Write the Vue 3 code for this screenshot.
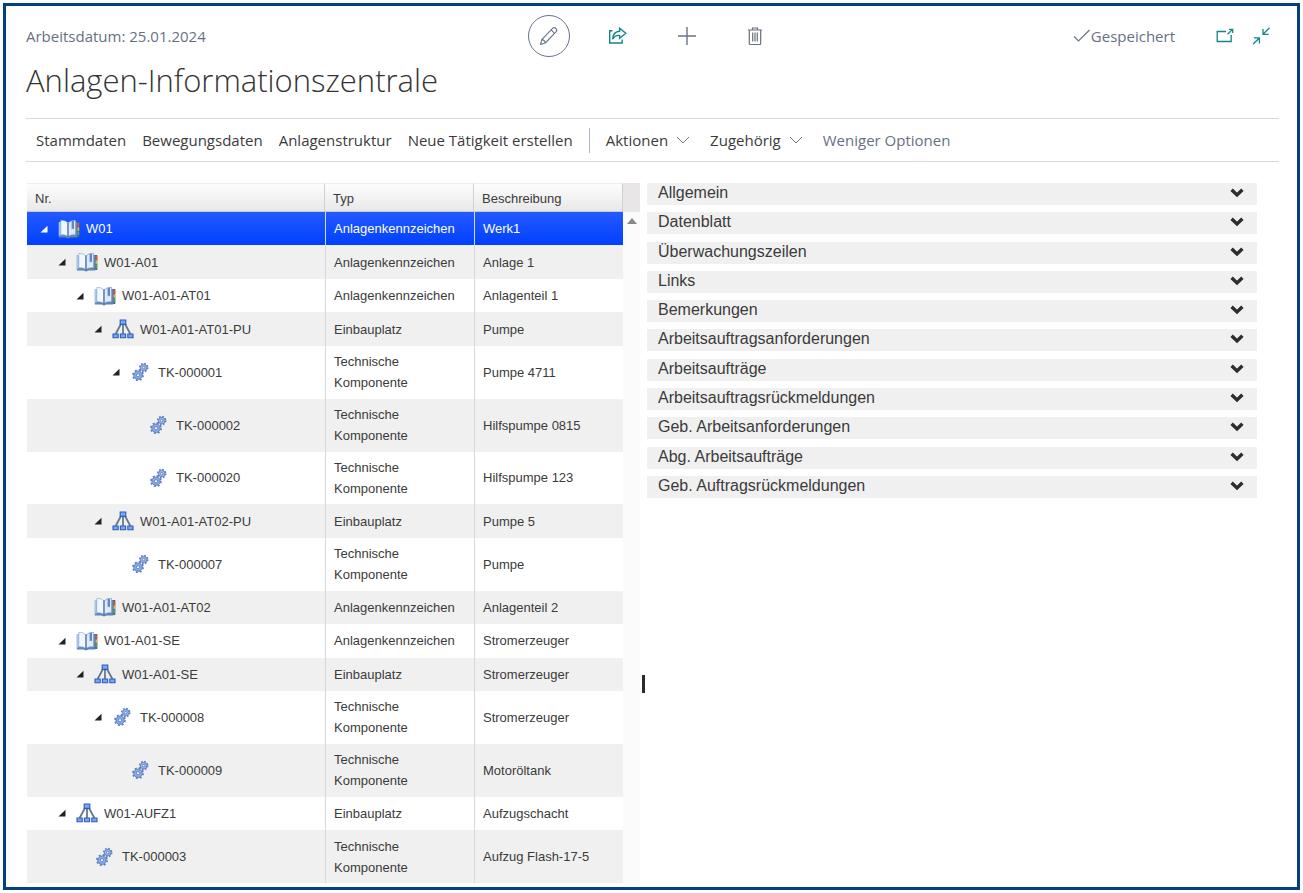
<script setup>
import { ref } from 'vue'

const rows = [
  { level: 0, icon: 'book', open: true, nr: 'W01', typ: 'Anlagenkennzeichen', text: 'Werk1' },
  { level: 1, icon: 'book', open: true, nr: 'W01-A01', typ: 'Anlagenkennzeichen', text: 'Anlage 1' },
  { level: 2, icon: 'book', open: true, nr: 'W01-A01-AT01', typ: 'Anlagenkennzeichen', text: 'Anlagenteil 1' },
  { level: 3, icon: 'place', open: true, nr: 'W01-A01-AT01-PU', typ: 'Einbauplatz', text: 'Pumpe' },
  { level: 4, icon: 'gear', open: true, nr: 'TK-000001', typ: 'Technische Komponente', text: 'Pumpe 4711' },
  { level: 5, icon: 'gear', open: false, nr: 'TK-000002', typ: 'Technische Komponente', text: 'Hilfspumpe 0815' },
  { level: 5, icon: 'gear', open: false, nr: 'TK-000020', typ: 'Technische Komponente', text: 'Hilfspumpe 123' },
  { level: 3, icon: 'place', open: true, nr: 'W01-A01-AT02-PU', typ: 'Einbauplatz', text: 'Pumpe 5' },
  { level: 4, icon: 'gear', open: false, nr: 'TK-000007', typ: 'Technische Komponente', text: 'Pumpe' },
  { level: 2, icon: 'book', open: false, nr: 'W01-A01-AT02', typ: 'Anlagenkennzeichen', text: 'Anlagenteil 2' },
  { level: 1, icon: 'book', open: true, nr: 'W01-A01-SE', typ: 'Anlagenkennzeichen', text: 'Stromerzeuger' },
  { level: 2, icon: 'place', open: true, nr: 'W01-A01-SE', typ: 'Einbauplatz', text: 'Stromerzeuger' },
  { level: 3, icon: 'gear', open: true, nr: 'TK-000008', typ: 'Technische Komponente', text: 'Stromerzeuger' },
  { level: 4, icon: 'gear', open: false, nr: 'TK-000009', typ: 'Technische Komponente', text: 'Motoröltank' },
  { level: 1, icon: 'place', open: true, nr: 'W01-AUFZ1', typ: 'Einbauplatz', text: 'Aufzugschacht' },
  { level: 2, icon: 'gear', open: false, nr: 'TK-000003', typ: 'Technische Komponente', text: 'Aufzug Flash-17-5' },
]

const sections = [
  'Allgemein',
  'Datenblatt',
  'Überwachungszeilen',
  'Links',
  'Bemerkungen',
  'Arbeitsauftragsanforderungen',
  'Arbeitsaufträge',
  'Arbeitsauftragsrückmeldungen',
  'Geb. Arbeitsanforderungen',
  'Abg. Arbeitsaufträge',
  'Geb. Auftragsrückmeldungen',
]

const selected = ref(0)
</script>

<template>
  <div class="page">
    <div class="frame">
      <header class="topbar">
        <span class="muted">Arbeitsdatum: 25.01.2024</span>
        <div class="tools">
          <button class="tool round" type="button" aria-label="Bearbeiten">
            <svg width="20" height="20" viewBox="0 0 20 20" fill="none" stroke="#69738a" stroke-width="1.1" stroke-linejoin="round">
              <path d="M1.5 18.5 L2.8 13.6 L13.8 2.2 Q15.2 0.9 16.8 2.4 Q18.6 4 17.2 5.6 L6.3 17 Z" />
              <path d="M2.8 13.6 Q5.6 13.8 6.3 17 M12.2 3.9 L15.5 7.3" />
            </svg>
          </button>
          <button class="tool" type="button" aria-label="Teilen">
            <svg width="20" height="20" viewBox="0 0 20 20" fill="none" stroke="#11878a" stroke-width="1.4">
              <path d="M4.5 4.7 H1.7 V17 H14.2 V13.5" />
              <path d="M11.6 2.2 L17.8 7.3 L11.6 12.3 V9.4 Q7 9 4.6 13.2 Q5.2 5.6 11.6 5.3 Z" />
            </svg>
          </button>
          <button class="tool" type="button" aria-label="Neu">
            <svg width="20" height="20" viewBox="0 0 20 20" fill="none" stroke="#69738a" stroke-width="1.4">
              <path d="M1 10 H19 M10 1 V19" />
            </svg>
          </button>
          <button class="tool" type="button" aria-label="Löschen">
            <svg width="20" height="20" viewBox="0 0 20 20" fill="none" stroke="#69717c" stroke-width="1.2">
              <path d="M2 4 H16 M6.5 4 V2 H11.5 V4 M3.3 4.2 V17.4 Q3.3 18.5 4.4 18.5 H13.6 Q14.7 18.5 14.7 17.4 V4.2" />
              <path d="M6.7 6.5 V15.5 M9 6.5 V15.5 M11.3 6.5 V15.5" />
            </svg>
          </button>
        </div>
        <div class="state">
          <svg width="18" height="16" viewBox="0 0 18 16" fill="none" stroke="#69738a" stroke-width="1.2">
            <path d="M1 8.5 L5.5 13 L16.5 2" />
          </svg>
          <span class="muted saved">Gespeichert</span>
          <button class="mini" type="button" aria-label="In neuem Fenster öffnen">
            <svg width="18" height="18" viewBox="0 0 18 18" fill="none" stroke="#11878a" stroke-width="1.3">
              <path d="M10 4.5 H1.2 V14.5 H15.2 V8" />
              <path d="M11.5 7.3 L16.6 2.4 M13 2.3 H16.7 V6" />
            </svg>
          </button>
          <button class="mini" type="button" aria-label="Verkleinern">
            <svg width="18" height="18" viewBox="0 0 18 18" fill="none" stroke="#11878a" stroke-width="1.3">
              <path d="M17.5 0.8 L11 7.2 M11 2 V7.3 H16.6" />
              <path d="M1 17.3 L7.3 11 M2 10.8 H7.4 V16.4" />
            </svg>
          </button>
        </div>
      </header>

      <h1>Anlagen-Informationszentrale</h1>

      <nav class="actions">
        <button type="button">Stammdaten</button>
        <button type="button">Bewegungsdaten</button>
        <button type="button">Anlagenstruktur</button>
        <button type="button">Neue Tätigkeit erstellen</button>
        <span class="divider"></span>
        <button type="button" class="menu">
          Aktionen
          <svg width="14" height="8" viewBox="0 0 14 8" fill="none" stroke="#777" stroke-width="1"><path d="M1 1 L7 7 L13 1" /></svg>
        </button>
        <button type="button" class="menu">
          Zugehörig
          <svg width="14" height="8" viewBox="0 0 14 8" fill="none" stroke="#777" stroke-width="1"><path d="M1 1 L7 7 L13 1" /></svg>
        </button>
        <button type="button" class="muted">Weniger Optionen</button>
      </nav>

      <main class="content">
        <section class="tree">
          <table>
            <thead>
              <tr>
                <th class="wide">Nr.</th>
                <th>Typ</th>
                <th>Beschreibung</th>
              </tr>
            </thead>
            <tbody>
              <tr v-for="(row, i) in rows" :key="i" :class="{ selected: i === selected }" @click="selected = i">
                <td>
                  <div class="node" :style="{ paddingLeft: row.level * 18 + 'px' }">
                    <span class="arrow">
                      <svg v-if="row.open" width="8" height="8" viewBox="0 0 8 8"><path d="M7.5 0.8 V7.5 H0.5 Z" fill="currentColor" /></svg>
                    </span>
                    <svg v-if="row.icon === 'book'" class="icon" width="22" height="20" viewBox="0 0 22 20">
                      <path d="M17.5 3 H21.3 V18 H17.5 Z" fill="#5a6470" />
                      <path d="M19.4 4 H21.3 V7.6 H19.4 Z" fill="#d9534a" />
                      <path d="M19.4 8.4 H21.3 V11.8 H19.4 Z" fill="#e8b63c" />
                      <path d="M19.4 12.6 H21.3 V16 H19.4 Z" fill="#37a98f" />
                      <path d="M0.8 3 H19.2 V18.6 H12.5 L10 19.4 L7.5 18.6 H0.8 Z" fill="#5f86b6" />
                      <path d="M0.8 3 H2.8 V16.6 H0.8 Z" fill="#a5c6ee" />
                      <path d="M2.8 1.4 Q7.6 1 10 4 V17.6 Q7.6 15.2 2.8 15.8 Z" fill="#f1f7fe" stroke="#86a3c9" stroke-width="0.6" />
                      <path d="M17.6 1.4 Q12.6 1 10 4 V17.6 Q12.6 15.2 17.6 15.8 Z" fill="#dfebfa" stroke="#7290bb" stroke-width="0.6" />
                      <path d="M13.6 1.8 H16 V10.6 L14.8 9.4 L13.6 10.6 Z" fill="#5d88cf" />
                      <path d="M10 4 V18.2" stroke="#44618c" stroke-width="1" />
                    </svg>
                    <svg v-else-if="row.icon === 'place'" class="icon" width="22" height="20" viewBox="0 0 22 20">
                      <path d="M9 5 L3.6 15 M13 5 L18.4 15 M11 5 V15" fill="none" stroke="#66788f" stroke-width="1.8" />
                      <g fill="#7aa7f5" stroke="#2b5cba" stroke-width="1.1">
                        <path d="M8.2 1 H13.8 V5.4 H8.2 Z" />
                        <path d="M1 15 H6.2 V18.8 H1 Z" />
                        <path d="M8.4 15 H13.6 V18.8 H8.4 Z" />
                        <path d="M15.8 15 H21 V18.8 H15.8 Z" />
                      </g>
                    </svg>
                    <svg v-else class="icon" width="22" height="20" viewBox="0 0 22 20">
                      <g fill="none" stroke="#5f7fc0">
                        <circle cx="8" cy="13.2" r="5" stroke-width="1.8" stroke-dasharray="2 1.93" />
                        <circle cx="13.7" cy="5.6" r="4" stroke-width="1.6" stroke-dasharray="1.7 1.44" />
                      </g>
                      <g stroke="#5377bd" stroke-width="0.8">
                        <circle cx="8" cy="13.2" r="4.2" fill="#89a9e6" />
                        <circle cx="13.7" cy="5.6" r="3.3" fill="#9ab6ec" />
                        <circle cx="8" cy="13.2" r="1.6" fill="#f4f7fd" />
                        <circle cx="13.7" cy="5.6" r="1.2" fill="#f4f7fd" />
                      </g>
                    </svg>
                    <span>{{ row.nr }}</span>
                  </div>
                </td>
                <td>{{ row.typ }}</td>
                <td>{{ row.text }}</td>
              </tr>
            </tbody>
          </table>
          <div class="scroll">
            <div class="corner"></div>
            <svg width="10" height="6" viewBox="0 0 10 6"><path d="M0 6 L5 0 L10 6 Z" fill="#8a8a8a" /></svg>
          </div>
        </section>

        <div class="splitter"><span class="handle"></span></div>

        <section class="panels">
          <button v-for="name in sections" :key="name" type="button" class="panel">
            <span>{{ name }}</span>
            <svg width="14" height="10" viewBox="0 0 14 10" fill="none" stroke="#2d2d2d" stroke-width="3.4"><path d="M1.6 1.8 L7 7 L12.4 1.8" /></svg>
          </button>
        </section>
      </main>
    </div>
  </div>
</template>

<style>
body {
  margin: 0;
  background: #fff;
}
</style>

<style scoped>
.page {
  box-sizing: border-box;
  height: 100vh;
  padding: 3px;
  font-family: "Open Sans", "Noto Sans", sans-serif;
  color: #3b3b3b;
}
.frame {
  box-sizing: border-box;
  height: 100%;
  display: flex;
  flex-direction: column;
  border: 3px solid #00427c;
  padding: 9px 18px 4px 20px;
}
button {
  font: inherit;
  color: inherit;
  background: none;
  border: 0;
  padding: 0;
  cursor: pointer;
}
svg {
  display: block;
  flex: none;
}
.muted {
  color: #667085;
}
.topbar {
  display: grid;
  grid-template-columns: 1fr auto 1fr;
  align-items: center;
  font-size: 15px;
}
.tools {
  display: flex;
  gap: 27px;
}
.tool {
  box-sizing: border-box;
  width: 42px;
  height: 42px;
  display: flex;
  align-items: center;
  justify-content: center;
}
.round {
  border: 1px solid #69738a;
  border-radius: 50%;
}
.state {
  display: flex;
  align-items: center;
  justify-content: flex-end;
  padding-right: 9px;
}
.saved {
  margin-right: 41px;
}
.mini + .mini {
  margin-left: 18px;
}
h1 {
  margin: 2px 0 16px;
  font-size: 31px;
  line-height: 43px;
  font-weight: 300;
  color: #333;
}
.actions {
  display: flex;
  align-items: center;
  gap: 16px;
  height: 42px;
  padding-left: 10px;
  border-top: 1px solid #d9d9d9;
  border-bottom: 1px solid #d9d9d9;
  font-size: 15px;
}
.actions button {
  display: flex;
  align-items: center;
  gap: 8px;
  white-space: nowrap;
}
.actions .menu {
  padding-right: 4px;
}
.divider {
  width: 1px;
  height: 25px;
  background: #b4b8c6;
}
.content {
  flex: 1;
  min-height: 0;
  display: grid;
  grid-template-columns: 613fr 7px 610fr;
  margin: 21px 22px 0 1px;
  font-family: "Liberation Sans", Arial, sans-serif;
}
.tree {
  display: flex;
  min-height: 0;
}
table {
  flex: 1;
  width: 100%;
  height: 100%;
  table-layout: fixed;
  border-collapse: separate;
  border-spacing: 0;
  font-size: 13px;
  line-height: 21px;
}
th {
  box-sizing: border-box;
  height: 29px;
  padding: 2px 8px 0;
  text-align: left;
  font-weight: 400;
  background: linear-gradient(#fdfdfd, #e8e8e8);
  border-top: 1px solid #eee;
  border-bottom: 1px solid #c9c9c9;
  border-right: 1px solid #d0d0d0;
}
.wide {
  width: 50%;
}
td {
  box-sizing: border-box;
  height: 33px;
  padding: 5px 8px;
  border-left: 1px solid #d9d9d9;
}
td:first-child {
  border-left: 0;
  padding-left: 13px;
}
tbody tr:nth-child(even) {
  background: #f0f0f0;
}
tbody tr.selected {
  color: #fff;
  background: linear-gradient(#2459ff, #0040ff);
}
.node {
  display: flex;
  align-items: center;
}
.arrow {
  width: 8px;
  margin-right: 10px;
  color: #222;
}
.selected .arrow {
  color: #fff;
}
.icon {
  margin-right: 6px;
}
.scroll {
  flex: none;
  width: 17px;
  background: #fbfbfb;
  display: flex;
  flex-direction: column;
  align-items: center;
  gap: 6px;
}
.corner {
  align-self: stretch;
  height: 29px;
  background: #e8e6e7;
}
.splitter {
  display: flex;
  flex-direction: column;
  align-items: center;
  padding-top: 492px;
}
.handle {
  width: 3px;
  height: 18px;
  background: #2b2b2b;
}
.panels {
  height: 45%;
  display: flex;
  flex-direction: column;
  justify-content: space-between;
}
.panel {
  display: flex;
  align-items: center;
  justify-content: space-between;
  padding: 0 13px 2px 11px;
  background: #f0f0f0;
  font-size: 16px;
  line-height: 20px;
}
</style>
